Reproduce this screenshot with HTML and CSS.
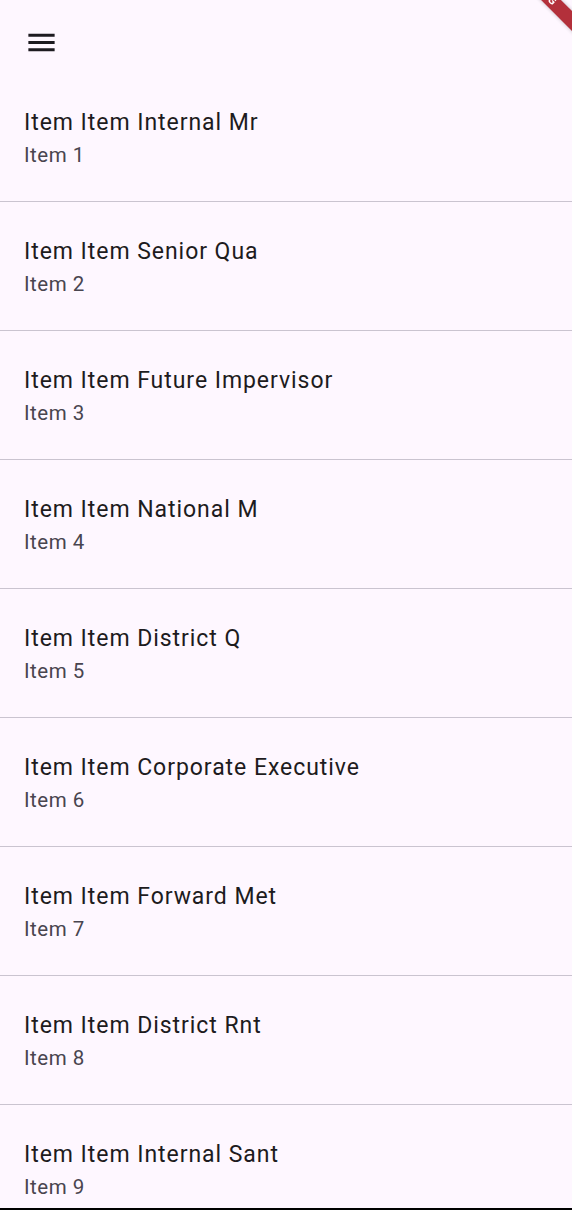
FILE: index.html
```html
<!DOCTYPE html>
<html lang="en">
<head>
<meta charset="utf-8">
<title>List</title>
<link rel="stylesheet" href="styles.css">
</head>
<body>
<div class="app">
  <header class="appbar">
    <svg class="menu-icon" viewBox="0 0 24 24" width="35" height="35" aria-hidden="true">
      <path d="M3 18h18v-2H3v2zm0-5h18v-2H3v2zm0-7v2h18V6H3z" fill="#1d1b20"/>
    </svg>
  </header>
  <ul class="list">
    <li class="tile"><div class="title">Item Item Internal Mr</div><div class="subtitle">Item 1</div></li>
    <li class="tile"><div class="title">Item Item Senior Qua</div><div class="subtitle">Item 2</div></li>
    <li class="tile"><div class="title">Item Item Future Impervisor</div><div class="subtitle">Item 3</div></li>
    <li class="tile"><div class="title">Item Item National M</div><div class="subtitle">Item 4</div></li>
    <li class="tile"><div class="title">Item Item District Q</div><div class="subtitle">Item 5</div></li>
    <li class="tile"><div class="title">Item Item Corporate Executive</div><div class="subtitle">Item 6</div></li>
    <li class="tile"><div class="title">Item Item Forward Met</div><div class="subtitle">Item 7</div></li>
    <li class="tile"><div class="title">Item Item District Rnt</div><div class="subtitle">Item 8</div></li>
    <li class="tile"><div class="title">Item Item Internal Sant</div><div class="subtitle">Item 9</div></li>
  </ul>
</div>
<div class="banner-wrap"><div class="banner">DEBUG</div></div>
<div class="bottom-edge"></div>
</body>
</html>
```
FILE: styles.css
```css
html, body {
  margin: 0;
  padding: 0;
  background: #fef7ff;
  overflow: hidden;
}
body {
  font-family: Roboto, "Noto Sans", "Liberation Sans", sans-serif;
  color: #1d1b20;
  height: 1210px;
}
.app {
  display: flex;
  flex-direction: column;
}
.appbar {
  height: 73px;
  box-sizing: border-box;
  padding: 25px 0 0 24px;
  display: flex;
  align-items: flex-start;
}
.menu-icon {
  display: block;
}
.list {
  list-style: none;
  margin: 0;
  padding: 0;
}
.tile {
  height: 128px;
  padding: 0 24px;
  border-bottom: 1px solid #cac4d0;
  display: flex;
  flex-direction: column;
}
.tile .title {
  margin-top: 36px;
  font-size: 23px;
  line-height: 28px;
  letter-spacing: 0.95px;
  color: #1d1b20;
  white-space: nowrap;
}
.tile .subtitle {
  margin-top: 6px;
  font-size: 20.5px;
  line-height: 24px;
  letter-spacing: 0.5px;
  color: #49454f;
}
.banner-wrap {
  position: fixed;
  top: 0;
  right: 0;
  width: 80px;
  height: 80px;
  overflow: hidden;
  pointer-events: none;
}
.banner {
  position: absolute;
  left: -11px;
  top: -17px;
  width: 120px;
  height: 14px;
  background: #b3303b;
  color: #ffffff;
  font-size: 11px;
  font-weight: 700;
  line-height: 14px;
  text-align: center;
  letter-spacing: 1px;
  transform: rotate(45deg);
  box-shadow: 0 0 4px rgba(0, 0, 0, 0.25);
}
.bottom-edge {
  position: fixed;
  left: 0;
  right: 0;
  bottom: 0;
  height: 2px;
  background: #000000;
}
```
